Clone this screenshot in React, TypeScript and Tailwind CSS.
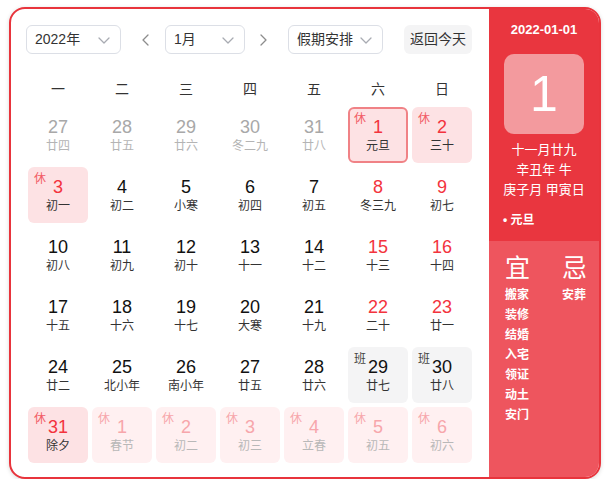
type Day = {
  n: number;
  lunar: string;
  kind?: "prev" | "next";
  red?: boolean;
  tag?: "休" | "班";
  selected?: boolean;
};

const weeks: Day[][] = [
  [
    { n: 27, lunar: "廿四", kind: "prev" },
    { n: 28, lunar: "廿五", kind: "prev" },
    { n: 29, lunar: "廿六", kind: "prev" },
    { n: 30, lunar: "冬二九", kind: "prev" },
    { n: 31, lunar: "廿八", kind: "prev" },
    { n: 1, lunar: "元旦", red: true, tag: "休", selected: true },
    { n: 2, lunar: "三十", red: true, tag: "休" },
  ],
  [
    { n: 3, lunar: "初一", red: true, tag: "休" },
    { n: 4, lunar: "初二" },
    { n: 5, lunar: "小寒" },
    { n: 6, lunar: "初四" },
    { n: 7, lunar: "初五" },
    { n: 8, lunar: "冬三九", red: true },
    { n: 9, lunar: "初七", red: true },
  ],
  [
    { n: 10, lunar: "初八" },
    { n: 11, lunar: "初九" },
    { n: 12, lunar: "初十" },
    { n: 13, lunar: "十一" },
    { n: 14, lunar: "十二" },
    { n: 15, lunar: "十三", red: true },
    { n: 16, lunar: "十四", red: true },
  ],
  [
    { n: 17, lunar: "十五" },
    { n: 18, lunar: "十六" },
    { n: 19, lunar: "十七" },
    { n: 20, lunar: "大寒" },
    { n: 21, lunar: "十九" },
    { n: 22, lunar: "二十", red: true },
    { n: 23, lunar: "廿一", red: true },
  ],
  [
    { n: 24, lunar: "廿二" },
    { n: 25, lunar: "北小年" },
    { n: 26, lunar: "南小年" },
    { n: 27, lunar: "廿五" },
    { n: 28, lunar: "廿六" },
    { n: 29, lunar: "廿七", tag: "班" },
    { n: 30, lunar: "廿八", tag: "班" },
  ],
  [
    { n: 31, lunar: "除夕", red: true, tag: "休" },
    { n: 1, lunar: "春节", kind: "next", tag: "休" },
    { n: 2, lunar: "初二", kind: "next", tag: "休" },
    { n: 3, lunar: "初三", kind: "next", tag: "休" },
    { n: 4, lunar: "立春", kind: "next", tag: "休" },
    { n: 5, lunar: "初五", kind: "next", tag: "休" },
    { n: 6, lunar: "初六", kind: "next", tag: "休" },
  ],
];

const yi = ["搬家", "装修", "结婚", "入宅", "领证", "动土", "安门"];
const ji = ["安葬"];

function Chevron({ dir = "down", className = "" }: { dir?: "down" | "left" | "right"; className?: string }) {
  const d =
    dir === "down" ? "M3 6l5 5 5-5" : dir === "left" ? "M10 3L5 8l5 5" : "M6 3l5 5-5 5";
  return (
    <svg viewBox="0 0 16 16" className={className} fill="none" stroke="currentColor" strokeWidth="1.3" strokeLinecap="round" strokeLinejoin="round">
      <path d={d} />
    </svg>
  );
}

function Select({ label, w }: { label: string; w: string }) {
  return (
    <div className={`${w} h-[29px] flex items-center justify-between pl-[8px] pr-[8px] border border-[#dcdfe6] rounded-[6px] bg-white`}>
      <span className="text-[14px] text-[#333]">{label}</span>
      <Chevron className="w-[16px] h-[16px] text-[#a8abb2]" />
    </div>
  );
}

function Cell({ d }: { d: Day }) {
  let bg = "";
  let numColor = "text-[#111]";
  let lunarColor = "text-[#333]";
  let tagColor = "text-[#f25a63]";
  if (d.kind === "prev") {
    numColor = "text-[#a8a8a8]";
    lunarColor = "text-[#b4b4b4]";
  } else if (d.kind === "next") {
    bg = "bg-[#fff0f1]";
    numColor = "text-[#f7a6ab]";
    lunarColor = "text-[#b8b8b8]";
    tagColor = "text-[#f7a6ab]";
  } else {
    if (d.red) numColor = "text-[#f3333d]";
    if (d.tag === "休") bg = "bg-[#fde2e4]";
    if (d.tag === "班") {
      bg = "bg-[#f4f4f5]";
      tagColor = "text-[#444]";
    }
  }
  const border = d.selected ? "border-2 border-[#f08286] pt-[7px]" : "pt-[9px]";
  return (
    <div className={`relative h-[56px] rounded-[6px] flex flex-col items-center ${bg} ${border}`}>
      {d.tag && (
        <span className={`absolute ${d.selected ? "left-[4px] top-[2px]" : "left-[6px] top-[4px]"} text-[12px] leading-[16px] ${tagColor}`}>
          {d.tag}
        </span>
      )}
      <span className={`text-[18px] leading-[22px] ${numColor}`}>{d.n}</span>
      <span className={`text-[12px] leading-[16px] ${lunarColor}`}>{d.lunar}</span>
    </div>
  );
}

export default function App() {
  return (
    <div
      className="pl-[9px] pt-[7px]"
      style={{ fontFamily: '"Liberation Sans", "Noto Sans CJK SC", sans-serif' }}
    >
      <div className="w-[592px] h-[472px] border-2 border-[#e8343c] rounded-[16px] overflow-hidden flex bg-white shadow-[0_1px_4px_rgba(0,0,0,0.15)]">
        {/* calendar */}
        <div className="w-[478px] pt-[16px]">
          <div className="flex items-center pl-[15px]">
            <Select label="2022年" w="w-[95px]" />
            <Chevron dir="left" className="w-[16px] h-[16px] ml-[17px] mr-[11px] text-[#8c8c8c]" />
            <Select label="1月" w="w-[80px]" />
            <Chevron dir="right" className="w-[16px] h-[16px] ml-[10px] mr-[17px] text-[#8c8c8c]" />
            <Select label="假期安排" w="w-[95px]" />
            <div className="ml-[21px] w-[68px] h-[29px] rounded-[6px] bg-[#f4f4f5] flex items-center justify-center text-[14px] text-[#333]">
              返回今天
            </div>
          </div>
          <div className="pl-[17px] mt-[17px]">
            <div className="grid grid-cols-7 gap-x-[4px] w-[444px] h-[36px] items-center text-[14px] text-[#333]">
              {["一", "二", "三", "四", "五", "六", "日"].map((w) => (
                <div key={w} className="text-center">{w}</div>
              ))}
            </div>
            <div className="grid grid-cols-7 gap-[4px] w-[444px]">
              {weeks.flat().map((d, i) => (
                <Cell key={i} d={d} />
              ))}
            </div>
          </div>
        </div>

        {/* side panel */}
        <div className="flex-1 flex flex-col text-white">
          <div className="h-[232px] bg-[#e9363f] flex flex-col items-center pt-[12px]">
            <div className="text-[13px] leading-[18px] font-bold">2022-01-01</div>
            <div className="mt-[15px] w-[80px] h-[80px] rounded-[10px] bg-[#f39a9e] flex items-center justify-center text-[50px] leading-none">
              1
            </div>
            <div className="mt-[6px] text-[13px] leading-[20px] text-center">
              <div>十一月廿九</div>
              <div>辛丑年 牛</div>
              <div>庚子月 甲寅日</div>
            </div>
            <div className="self-start pl-[14px] mt-[12px] text-[12px] leading-[16px] font-bold">• 元旦</div>
          </div>
          <div className="flex-1 bg-[#ee555e] flex pl-[16px] pt-[12px] gap-[32px]">
            <div className="flex flex-col">
              <div className="text-[25px] leading-[30px]">宜</div>
              <div className="mt-[2px] text-[12px] leading-[20px] font-bold">
                {yi.map((t) => (
                  <div key={t}>{t}</div>
                ))}
              </div>
            </div>
            <div className="flex flex-col">
              <div className="text-[25px] leading-[30px]">忌</div>
              <div className="mt-[2px] text-[12px] leading-[20px] font-bold">
                {ji.map((t) => (
                  <div key={t}>{t}</div>
                ))}
              </div>
            </div>
          </div>
        </div>
      </div>
    </div>
  );
}
